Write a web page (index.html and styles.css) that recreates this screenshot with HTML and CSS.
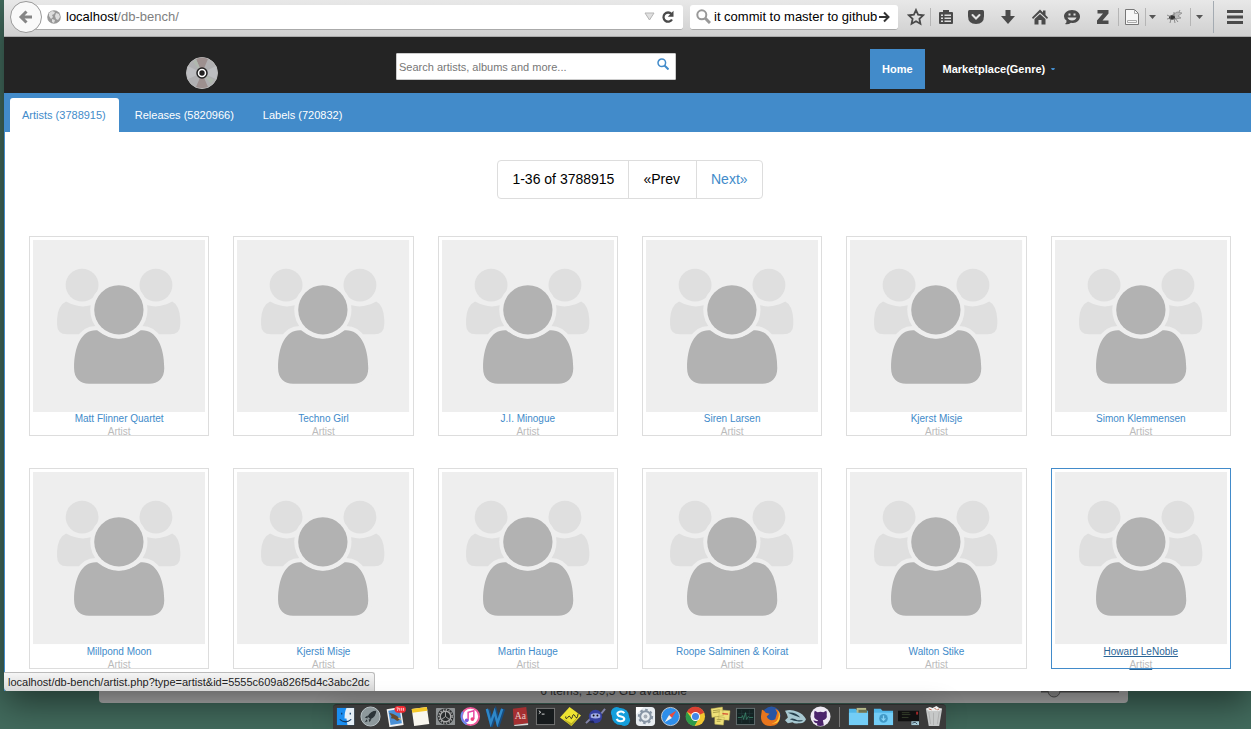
FILE: index.html
```html
<!DOCTYPE html>
<html lang="en">
<head>
<meta charset="utf-8">
<title>db-bench</title>
<link rel="stylesheet" href="styles.css">
</head>
<body>
<svg class="defs" aria-hidden="true">
  <symbol id="people" viewBox="0 0 172 172">
    <rect width="172" height="172" fill="#eee"/>
    <g fill="#dfdfdf">
      <circle cx="49" cy="45" r="16.4"/><circle cx="122.7" cy="45" r="16.4"/>
      <path d="M33 61.5q16 9 32 1v31.5H34q-10 0-10-10v-5q1-14 9-17.5zM139 61.5q-16 9-32 1v31.5h30q10 0 10-10v-5q-1-14-8-17.5z"/>
    </g>
    <g fill="#b2b2b2" stroke="#eee" stroke-width="8" paint-order="stroke">
      <path d="M64 90q21.500 17 43.500 0c15-1 23.500 15 23.500 38 0 10-6 15.500-15 15.500H56c-9 0-15-5.500-15-15.500 0-23 8-39 23-38z"/>
      <circle cx="85.700" cy="69.700" r="24.600"/>
    </g>
  </symbol>
  <symbol id="folder" viewBox="0 0 22 22"><path d="M1 3h7l2 2h11v15H1z" fill="#4fb5e6"/><path d="M1 7h20v13H1z" fill="#73cdf6"/></symbol>
</svg>

<div class="window">
  <div class="toolbar">
    <div class="address">
      <button class="back" aria-label="Back"><svg width="16" height="16" viewBox="0 0 16 16"><path d="M14 8H4M8.500 2.500 3 8l5.500 5.500" fill="none" stroke="#858585" stroke-width="3"/></svg></button>
      <label class="url">
        <svg width="14" height="14" viewBox="0 0 14 14"><circle cx="7" cy="7" r="6.800" fill="#989898"/><path d="M2 3l3-2 3 1-1 2-2 1 1 2-2 2-2-3zM9 3l3 1 1 3-2 3-2-1-1-3zM5 9l3 1-1 3-2-1z" fill="#ddd"/></svg>
        <span class="url-text" tabindex="0">localhost<span class="path">/db-bench/</span></span>
      </label>
      <button class="plain" aria-label="History"><svg width="11" height="9" viewBox="0 0 11 9"><path d="M1 1h9L5.500 8z" fill="#e0e0e0" stroke="#b5b5b5"/></svg></button>
      <button class="plain reload" aria-label="Reload"><svg width="14" height="14" viewBox="0 0 14 14"><path d="M10.500 4A4.600 4.600 0 1 0 11 9.500" fill="none" stroke="#4a4a4a" stroke-width="2.300"/><path d="M12.500.8v6H6.800z" fill="#4a4a4a"/></svg></button>
    </div>
    <div class="websearch">
      <svg width="15" height="15" viewBox="0 0 15 15" fill="none" stroke="#999"><circle cx="5.800" cy="5.800" r="4.500" stroke-width="2"/><path d="m9 9 5 5" stroke-width="3"/></svg>
      <input type="text" aria-label="Web search" value="it commit to master to github">
      <button class="plain" aria-label="Go"><svg width="12" height="12" viewBox="0 0 12 12" fill="none" stroke="#333" stroke-width="2"><path d="M1 6h9M6 1.500 10.500 6 6 10.500"/></svg></button>
    </div>
    <div class="tools">
      <button class="tool" aria-label="Bookmark"><svg width="18" height="18" viewBox="0 0 18 18"><path d="m9 2 2.100 4.700 5 .6-3.700 3.500 1 5L9 13.300l-4.400 2.500 1-5L1.900 7.300l5-.6z" fill="none" stroke="#4a4a4a" stroke-width="1.800"/></svg></button>
      <button class="tool line" aria-label="Reading list"><svg width="16" height="16" viewBox="0 0 16 16"><path d="M2 3h3V1h6v2h3q1 0 1 1v10q0 1-1 1H2q-1 0-1-1V4q0-1 1-1z" fill="#4a4a4a"/><path d="M3 5.500h2v1.500H3zm3.500 0H13v1.500H6.500zM3 8.500h2V10H3zm3.500 0H13V10H6.500zM3 11.500h2V13H3zm3.500 0H13V13H6.500z" fill="#ddd"/></svg></button>
      <button class="tool wide" aria-label="Pocket"><svg width="16" height="15" viewBox="0 0 16 15"><path d="M1.500 0h13Q16 0 16 1.500V6Q16 14 8 14T0 6V1.500Q0 0 1.500 0z" fill="#4a4a4a"/><path d="m4.500 5 3.500 3.500L11.500 5" fill="none" stroke="#e4e4e4" stroke-width="2" stroke-linecap="round"/></svg></button>
      <button class="tool wide" aria-label="Downloads"><svg width="16" height="16" viewBox="0 0 16 16"><path d="M5.500 1h5v6H15l-7 8-7-8h4.500z" fill="#4a4a4a"/></svg></button>
      <button class="tool wide" aria-label="Home page"><svg width="16" height="16" viewBox="0 0 16 16"><path d="m8 .5 3 3V1.500h2.500V6L16 8.500 15 10 8 3.500 1 10 0 8.500z" fill="#4a4a4a"/><path d="m8 5 5.500 5v5.500h-4v-4.500h-3v4.500h-4V10z" fill="#4a4a4a"/></svg></button>
      <button class="tool wide" aria-label="Hello"><svg width="16" height="16" viewBox="0 0 16 16"><path d="M8 1c5 0 8 3 8 6.500S13 14 9 14q-1 0-2-.3Q4 16 1 15q2-1.500 1.500-3.500Q0 10 0 7.500C0 4 3 1 8 1z" fill="#4a4a4a"/><path d="M4.500 4.500h2v2h-2zm5 0h2v2h-2zM3.500 8.500h9q-1 3-4.500 3t-4.500-3z" fill="#ddd"/></svg></button>
      <button class="tool" aria-label="Zotero"><svg width="12" height="14" viewBox="0 0 12 14"><path d="M.5 0h11v3.500L5.500 10.500h6V14H0v-3.500l6-7H.5z" fill="#4a4a4a"/></svg></button>
      <button class="tool line sheet" aria-label="Save page"><svg width="14" height="16" viewBox="0 0 14 16"><path d="M.5.5h9l4 4v11H.5z" fill="#f7f7f7" stroke="#777"/><path d="M9.500.5v4h4M2.500 11.500h9v2h-9z" fill="none" stroke="#aaa"/></svg></button>
      <button class="tool line thin" aria-label="Save options"><svg width="7" height="4" viewBox="0 0 7 4"><path d="M0 0h7L3.500 4z" fill="#555"/></svg></button>
      <button class="tool fly" aria-label="Firefly"><svg width="17" height="14" viewBox="0 0 17 14"><path d="m5 6 6-4 5 1-4 3 3 2-6 1z" fill="#bbb" stroke="#888" stroke-width=".7"/><ellipse cx="6" cy="7.500" rx="3" ry="2.200" fill="#333"/><path d="M1 5l4 2M1 9l4-1M4 13l1-4M9 13 8 8M12 12 9 8M8 2v4M13 2l1-2" fill="none" stroke="#777" stroke-width=".8"/></svg></button>
      <button class="tool line thin last" aria-label="Firefly options"><svg width="7" height="4" viewBox="0 0 7 4"><path d="M0 0h7L3.500 4z" fill="#555"/></svg></button>
      <button class="tool menu" aria-label="Menu"><svg width="16" height="14" viewBox="0 0 16 14"><path d="M0 1.500h16M0 7h16M0 12.500h16" stroke="#4a4a4a" stroke-width="3"/></svg></button>
    </div>
  </div>

  <header class="site-header">
    <a class="logo" href="#" aria-label="Discs"><svg width="32" height="32" viewBox="0 0 32 32"><circle cx="16" cy="16" r="15.500" fill="#b0b0b2" stroke="#bbb"/><path d="M16 16 10 2q6-3 12 0zM16 16l6 14q-6 2-12 0z" fill="#9d908f"/><path d="M16 16 2 9q-2 7 0 13zM16 16l14-7q2 7 0 13z" fill="#bdbec1"/><path d="m16 16-9-11 3-3zM16 16l9 11 3-4z" fill="#b0b8ae"/><circle cx="16" cy="16" r="5" fill="#fff" stroke="#222" stroke-width="1.500"/><circle cx="16" cy="16" r="2.700" fill="#222"/></svg></a>
    <form class="search">
      <input type="text" placeholder="Search artists, albums and more..." aria-label="Search artists, albums and more">
      <button class="plain" type="button" aria-label="Search"><svg width="12" height="12" viewBox="0 0 12 12" fill="none" stroke="#428bca"><circle cx="4.800" cy="4.800" r="3.800" stroke-width="1.500"/><path d="m7.500 7.500 4 4" stroke-width="2"/></svg></button>
    </form>
    <nav class="nav">
      <a class="nav-link current" href="#">Home</a>
      <a class="nav-link" href="#">Marketplace(Genre) <svg width="4" height="2" viewBox="0 0 4 2"><path d="M0 0h4L3 2H1z" fill="#428bca"/></svg></a>
    </nav>
  </header>

  <main class="page">
    <nav class="tabs">
      <a class="tab active" href="#">Artists (3788915)</a>
      <a class="tab" href="#">Releases (5820966)</a>
      <a class="tab" href="#">Labels (720832)</a>
    </nav>
    <div class="content">
      <div class="pager">
        <span class="pager-item">1-36 of 3788915</span>
        <span class="pager-item prev">«Prev</span>
        <a class="pager-item next" href="#">Next»</a>
      </div>
      <div class="artists">
        <a class="card" href="#"><svg class="photo"><use href="#people"/></svg><span class="name">Matt Flinner Quartet</span><span class="kind">Artist</span></a>
        <a class="card" href="#"><svg class="photo"><use href="#people"/></svg><span class="name">Techno Girl</span><span class="kind">Artist</span></a>
        <a class="card" href="#"><svg class="photo"><use href="#people"/></svg><span class="name">J.I. Minogue</span><span class="kind">Artist</span></a>
        <a class="card" href="#"><svg class="photo"><use href="#people"/></svg><span class="name">Siren Larsen</span><span class="kind">Artist</span></a>
        <a class="card" href="#"><svg class="photo"><use href="#people"/></svg><span class="name">Kjerst Misje</span><span class="kind">Artist</span></a>
        <a class="card" href="#"><svg class="photo"><use href="#people"/></svg><span class="name">Simon Klemmensen</span><span class="kind">Artist</span></a>
        <a class="card" href="#"><svg class="photo"><use href="#people"/></svg><span class="name">Millpond Moon</span><span class="kind">Artist</span></a>
        <a class="card" href="#"><svg class="photo"><use href="#people"/></svg><span class="name">Kjersti Misje</span><span class="kind">Artist</span></a>
        <a class="card" href="#"><svg class="photo"><use href="#people"/></svg><span class="name">Martin Hauge</span><span class="kind">Artist</span></a>
        <a class="card" href="#"><svg class="photo"><use href="#people"/></svg><span class="name">Roope Salminen &amp; Koirat</span><span class="kind">Artist</span></a>
        <a class="card" href="#"><svg class="photo"><use href="#people"/></svg><span class="name">Walton Stike</span><span class="kind">Artist</span></a>
        <a class="card hovered" href="#"><svg class="photo"><use href="#people"/></svg><span class="name">Howard LeNoble</span><span class="kind">Artist</span></a>
      </div>
    </div>
  </main>
  <div class="status">localhost/db-bench/artist.php?type=artist&amp;id=5555c609a826f5d4c3abc2dc</div>
</div>

<div class="finder">
  <span class="finder-info">6 items, 199,5 GB available</span>
  <svg class="slider" width="80" height="12" viewBox="0 0 80 12"><path d="M0 0h78v1.500H0z" fill="#555"/><circle cx="13" cy="0" r="6" fill="#999" stroke="#555"/></svg>
</div>

<div class="dock-area">
  <div class="dock">
    <span class="app"><svg viewBox="0 0 22 22"><path d="M2 2h18v18H2z" fill="#1a8df0"/><path d="M12 2h8v18h-7l-1-7h-2q0-7 2-11z" fill="#e4eef6"/><path d="M7 7v2M16 7v2M5 14q6 5 12 0" stroke="#123a66" stroke-width="1.300" fill="none"/></svg></span>
    <span class="app"><svg viewBox="0 0 22 22"><circle cx="11" cy="11" r="10" fill="#8e999c" stroke="#bcc5c8"/><path d="M17 5q-6 0-9 6l3 3q6-3 6-9zM8 10l-3 2 3 1zM12 14l-2 3-1-3zM7 14l-2 3 3-1z" fill="#2c3438"/></svg></span>
    <span class="app"><svg viewBox="0 0 22 22"><g transform="rotate(-9 11 11)"><path d="M3 2h15v19H3z" fill="#f2f2f2"/><path d="M4.500 4h12v15h-12z" fill="#4a90d6"/><path d="m5 6 4 2 4 3 2 4-3 1-3-3-3-1 1-2z" fill="#6b4a2a"/><path d="M13 13h3v3z" fill="#ddb263"/></g><rect x="10" y="0" width="12" height="7" rx="3.500" fill="#f12a32"/><path d="M12 2h2l-1 3M15.500 2v3M17.500 2v3M19.500 2v3" stroke="#fff" stroke-width=".8" fill="none"/></svg></span>
    <span class="app"><svg viewBox="0 0 22 22"><g transform="rotate(-8 11 11)"><path d="M3 2h16v18H3z" fill="#f8f6ee"/><path d="M3 2h16v4H3z" fill="#f4c726"/></g></svg></span>
    <span class="app"><svg viewBox="0 0 22 22"><rect x="1" y="2" width="20" height="18" rx="1" fill="#8d9193"/><circle cx="11" cy="11" r="8.500" fill="#292c2d"/><circle cx="11" cy="11" r="5.500" fill="none" stroke="#aaa" stroke-width="1.500"/><circle cx="11" cy="11" r="7" fill="none" stroke="#aaa" stroke-width="1.500" stroke-dasharray="1.500 1.500"/><path d="M11 11V6M11 11l4 3M11 11l-4 3" stroke="#aaa"/></svg></span>
    <span class="app"><svg viewBox="0 0 22 22"><circle cx="11" cy="11" r="9" fill="#fff" stroke="#f05a9c" stroke-width="2"/><path d="M3 6a9 9 0 0 0 4 13" fill="none" stroke="#6a8df3" stroke-width="2"/><path d="M8.500 15V6.500l6-1.500v8.500" fill="none" stroke="#e643a0" stroke-width="1.500"/><circle cx="7" cy="15" r="2" fill="#7a58e0"/><circle cx="13" cy="13.700" r="2" fill="#f04080"/></svg></span>
    <span class="app"><svg viewBox="0 0 22 22"><path d="m3 4 4 14 4-11 3 11 5-15" fill="none" stroke="#164c80" stroke-width="4.500"/><path d="m2 3 4 15 4-12 3 12L18 3" fill="none" stroke="#2f88c9" stroke-width="2.500"/></svg></span>
    <span class="app"><svg viewBox="0 0 22 22"><path d="m3 3 14-2 2 17-15 2z" fill="#a52f31"/><path d="m4 20 15-2v2L5 21z" fill="#ddd"/><text x="5" y="14" font-family="Liberation Serif, serif" font-size="10" fill="#e8c9c5">Aa</text></svg></span>
    <span class="app"><svg viewBox="0 0 22 22"><rect x="1.500" y="2.500" width="19" height="17" fill="#171b1d" stroke="#777"/><path d="m4 5 2 1.500L4 8M7 8.500h3" fill="none" stroke="#ddd"/></svg></span>
    <span class="app"><svg viewBox="0 0 22 22"><path d="m10 1 12 9-10 11L0 12z" fill="#eee431"/><path d="m3 13 9 5 8-8-8 11z" fill="#b8ae24"/><path d="M6 11q0 4 2 1t3 0 2-1 3 0 3-3" fill="none" stroke="#222"/></svg></span>
    <span class="app"><svg viewBox="0 0 22 22"><path d="m1 18 6-6M17 8l4-5" stroke="#8284a8" stroke-width="2"/><circle cx="11" cy="11" r="7" fill="#3540a0"/><path d="M6 9q5-3 10 0v3q-5 2-10 0z" fill="#a5afe6"/><circle cx="9" cy="10" r="1" fill="#111"/><circle cx="13" cy="10" r="1" fill="#111"/><path d="M4 17q5-4 6 1z" fill="#1c2258"/></svg></span>
    <span class="app"><svg viewBox="0 0 22 22"><circle cx="7" cy="7" r="6" fill="#159fdc"/><circle cx="15" cy="15" r="6" fill="#159fdc"/><circle cx="11" cy="11" r="9" fill="#159fdc"/><path d="M15 7.500Q13 5 10 6q-3 1-2 3 .5 1.500 3.500 2t3.500 2.500q-.5 2.500-4 2.500-3 0-4-2.500" fill="none" stroke="#fff" stroke-width="2.200"/></svg></span>
    <span class="app"><svg viewBox="0 0 22 22"><rect x="1" y="1" width="20" height="20" rx="4" fill="#e8edf1"/><path d="M1 1h8L1 9z" fill="#fff"/><circle cx="11" cy="11" r="5.500" fill="none" stroke="#8795a5" stroke-width="2"/><circle cx="11" cy="11" r="7" fill="none" stroke="#8795a5" stroke-width="2" stroke-dasharray="2.700 2.700"/><circle cx="11" cy="11" r="2" fill="#a5adb6"/></svg></span>
    <span class="app"><svg viewBox="0 0 22 22"><circle cx="11" cy="11" r="9.500" fill="#2d8eeb" stroke="#c5cbd0"/><path d="m17 5-7.500 4.500 3 3z" fill="#ed4c3d"/><path d="m5 17 7.500-4.500-3-3z" fill="#f1f1f1"/></svg></span>
    <span class="app"><svg viewBox="0 0 22 22"><circle cx="11" cy="11" r="10" fill="#f2c730"/><path d="M11 11 2 6a10 10 0 0 1 18 1z" fill="#db4032"/><path d="M2 6a10 10 0 0 0 8 15l4-7-7-1z" fill="#2d9b4a"/><circle cx="11" cy="11" r="4.700" fill="#fff"/><circle cx="11" cy="11" r="3.700" fill="#4286e8"/></svg></span>
    <span class="app"><svg viewBox="0 0 22 22"><path d="m1 3 12-2 1 9-12 2zM10 4l11 1-1 10-11-1zM5 11l10 1-1 8-9-1z" fill="#eee078" stroke="#b5a94d" stroke-width=".5"/><path d="m3 5 7-1M3 7l7-1M7 14h5M7 16h4" stroke="#978b3a" stroke-width=".8"/><path d="m13 8 6 .5" stroke="#d64b32" stroke-width="1.500"/></svg></span>
    <span class="app"><svg viewBox="0 0 22 22"><rect x="1.500" y="2.500" width="19" height="17" fill="#142323" stroke="#647071"/><path d="M3 8h16M3 14h16M7 4v14M15 4v14" stroke="#294243" stroke-width=".5"/><path d="M3 12h4l1-2 1 4 2-7 1 7 2-3 1 1h4" fill="none" stroke="#3c8a70" stroke-width=".8"/></svg></span>
    <span class="app"><svg viewBox="0 0 22 22"><circle cx="12" cy="10" r="9.500" fill="#2855a4"/><path d="M2 4q2 0 4 3l4 1-3 3q3 6 9 3l2-7-2-4q6 3 5 9-1 9-10 9Q1 21 1 11z" fill="#e8751d"/><path d="M18 4q3 5 1 9-2 5-7 5 8 2 9-7 0-4-3-7z" fill="#ffca37"/></svg></span>
    <span class="app"><svg viewBox="0 0 22 22"><path d="M0 5q6-2 13 1 6 2 9 8-2 5-8 4-4 1-6-1l-5 1-3-3 3-3-1-3z" fill="#a8c9d2"/><path d="M3 7q8-1 13 5l-6-2zM5 14q3-2 8 1h6q-2 2-6 1-3 0-8-2z" fill="#26404d"/></svg></span>
    <span class="app"><svg viewBox="0 0 22 22"><circle cx="11" cy="11" r="10.500" fill="#eee9f3"/><path d="M5 5l3 1.500q3-1 6 0L17 5q1 2 .5 4 1 5-4 6l1 5.500q-4 1-7 0V18q-3 0-4-3l4 1 1-1q-5-1-4-6-.5-2 .5-4z" fill="#4b246b"/></svg></span>
    <span class="divider"></span>
    <span class="app"><svg viewBox="0 0 22 22"><use href="#folder"/><path d="M9 2h10v5H9z" fill="#b5b98a"/><path d="M11 4h9v3h-9z" fill="#6d7454"/></svg></span>
    <span class="app"><svg viewBox="0 0 22 22"><use href="#folder"/><circle cx="11" cy="13" r="4.500" fill="#4199c6"/><path d="M11 10v5m-2-2 2 2 2-2" fill="none" stroke="#87d4f5" stroke-width="1.300"/></svg></span>
    <span class="app"><svg viewBox="0 0 22 22"><path d="M0 5h22v11H0z" fill="#111"/><path d="M4 7h8M4 9h9M4 12h7" stroke="#3d4830" stroke-width=".8"/><path d="M19 6h2v3h-2z" fill="#a42728"/><path d="M14 16h8v4h-8z" fill="#a8ccd8"/><path d="m15 18 3-1 2 2" stroke="#345" fill="none"/></svg></span>
    <span class="app"><svg viewBox="0 0 22 22"><path d="M3 3h17l-3 18H6z" fill="#c6c8c8"/><path d="m6 6 2 13M11 7v13M17 6l-2 13" stroke="#aaa" stroke-width=".8"/><path d="m3 3 4-2 3 1 4-2 3 2 3 1-3 2H6z" fill="#f2f2f2"/><path d="m6 3 3 1M12 2l2 2M15 4l2-1" stroke="#b65b43"/></svg></span>
  </div>
</div>
</body>
</html>
```

FILE: styles.css
```css
* {
  box-sizing: border-box;
}

body {
  margin: 0;
  min-height: 100vh;
  overflow-x: hidden;
  background: #426b5d;
  font-family: "Liberation Sans", Arial, sans-serif;
  font-size: 11px;
  color: #222;
}

a {
  color: #428bca;
  text-decoration: none;
}

button,
input {
  font: inherit;
}

svg {
  display: block;
  flex: none;
}

.defs {
  position: absolute;
  width: 0;
  height: 0;
}

.window {
  position: relative;
  z-index: 1;
  margin-left: 4px;
  background: #fff;
  border-radius: 0 0 0 4px;
  box-shadow: 0 12px 36px rgba(0, 0, 0, 0.5);
}

/* Browser toolbar */
.toolbar {
  display: flex;
  height: 37px;
  padding-bottom: 2px;
  align-items: center;
  background: linear-gradient(#e8e8e8, #d0d0d0);
  border-bottom: 1px solid #aaa;
}

.address {
  display: flex;
  flex: 1;
  height: 25px;
  margin-left: 20px;
  padding-right: 8px;
  gap: 12px;
  align-items: center;
  background: #fff;
  border-bottom: 1px solid #aaa;
  border-radius: 3px;
}

.back {
  display: flex;
  flex: none;
  width: 32px;
  height: 32px;
  margin-left: -14px;
  padding: 0;
  align-items: center;
  justify-content: center;
  background: #f9f9f9;
  border: 1px solid #999;
  border-radius: 50%;
}

.url {
  display: flex;
  flex: 1;
  gap: 5px;
  margin-left: -7px;
  align-items: center;
  font-size: 13px;
  color: #000;
}

.path {
  color: #808080;
}

.plain {
  flex: none;
  padding: 0;
  background: none;
  border: 0;
}

.reload {
  margin-left: -6px;
}

.websearch {
  display: flex;
  width: 208px;
  height: 25px;
  margin-left: 7px;
  padding: 0 8px 0 6px;
  align-items: center;
  background: #fff;
  border-bottom: 1px solid #aaa;
  border-radius: 3px;
}

.websearch input {
  flex: 1;
  min-width: 0;
  margin: 0 1px 0 3px;
  padding: 0;
  border: 0;
  font-size: 13px;
  text-align: right;
  color: #000;
}

.tools {
  display: flex;
  padding-left: 4px;
  align-items: center;
}

.tool {
  display: flex;
  width: 30px;
  height: 18px;
  padding: 0;
  align-items: center;
  justify-content: center;
  background: none;
  border: 0;
}

.tool:first-child {
  width: 28px;
}

.wide {
  width: 32px;
}

.line {
  border-left: 1px solid #b5b5b5;
}

.sheet {
  width: 27px;
}

.thin {
  width: 14px;
}

.fly {
  width: 31px;
}

.last {
  width: 23px;
  padding-right: 6px;
}

.menu {
  width: 38px;
  height: 32px;
  padding-left: 5px;
  border-left: 1px solid #a4abb2;
}

/* Site header */
.site-header {
  display: grid;
  grid-template-columns: 392fr 474fr 381fr;
  min-height: 56px;
  align-items: center;
  background: #242424;
}

.logo {
  justify-self: center;
  margin: 16px 0 0 4px;
}

.search {
  display: flex;
  width: 280px;
  height: 27px;
  margin-top: 3px;
  padding: 0 6px 0 2px;
  align-items: center;
  background: #fff;
  border: 1px solid #ccc;
  border-radius: 1px;
}

.search input {
  flex: 1;
  min-width: 0;
  padding: 0;
  border: 0;
  outline: 0;
}

.search input::placeholder {
  color: #777;
}

.search button {
  margin-bottom: 5px;
}

.nav {
  display: flex;
  gap: 6px;
  padding-top: 8px;
}

.nav-link {
  display: flex;
  gap: 6px;
  padding: 0 12px;
  line-height: 40px;
  align-items: center;
  font-weight: bold;
  color: #fff;
}

.current {
  background: #428bca;
}

/* Catalogue */
.page {
  padding-bottom: 22px;
  border-left: 1px solid #428bca;
}

.tabs {
  display: flex;
  gap: 4px;
  padding: 5px 5px 0;
  background: #428bca;
}

.tab {
  padding: 0 13px 0 12px;
  line-height: 34px;
  border-radius: 3px 3px 0 0;
  color: #fff;
}

.active {
  background: #fff;
  color: #428bca;
}

.content {
  padding: 28px 20px 0 24px;
}

.pager {
  display: flex;
  width: max-content;
  margin: 0 auto 37px;
  font-size: 14px;
  line-height: 37px;
  color: #000;
  border: 1px solid #ddd;
  border-radius: 4px;
}

.pager-item {
  padding: 0 14px;
}

.prev {
  padding-right: 16px;
  border-left: 1px solid #ddd;
  border-right: 1px solid #ddd;
}

.artists {
  display: grid;
  grid-template-columns: repeat(6, 1fr);
  gap: 32px 24px;
}

.card {
  display: flex;
  flex-direction: column;
  align-items: center;
  padding: 3px 3px 0;
  border: 1px solid #ddd;
  font-size: 10px;
  line-height: 13px;
}

.photo {
  width: 100%;
  aspect-ratio: 1;
}

.kind {
  height: 10px;
  color: #bbb;
}

.hovered {
  border-color: #428bca;
}

.hovered .name {
  color: #2a6496;
  text-decoration: underline;
}

.hovered .kind {
  text-decoration: underline #2a6496;
}

.status {
  position: absolute;
  bottom: 0;
  left: 0;
  padding: 0 5px 0 4px;
  line-height: 18px;
  background: linear-gradient(#f5f5f5, #d8d8d8);
  border: 1px solid #bbb;
  border-width: 1px 1px 0 0;
  border-radius: 0 3px 0 4px;
}

/* Window behind the browser */
.finder {
  position: relative;
  display: flex;
  height: 12px;
  margin: 0 123px 0 99px;
  justify-content: center;
  background: #b4b4b4;
  border-radius: 0 0 4px 4px;
}

.finder-info {
  margin-top: -7px;
  font-size: 12px;
  line-height: 14px;
  color: #3c3c3c;
}

.slider {
  position: absolute;
  top: 0;
  right: 7px;
}

/* Dock */
.dock-area {
  position: relative;
  z-index: 2;
  display: flex;
  padding: 1px 0 0 28px;
  justify-content: center;
}

.dock {
  display: flex;
  height: 25px;
  align-items: center;
  background: #3a3a3a;
  border-top: 1px solid #2b2b2b;
  border-radius: 4px 4px 0 0;
  box-shadow: 0 0 24px rgba(0, 0, 0, 0.15);
}

.app {
  display: flex;
  width: 25px;
  justify-content: center;
}

.app svg {
  width: 21px;
  height: 21px;
}

.divider {
  width: 1px;
  height: 20px;
  margin: 0 6px;
  background: #777;
}
```
